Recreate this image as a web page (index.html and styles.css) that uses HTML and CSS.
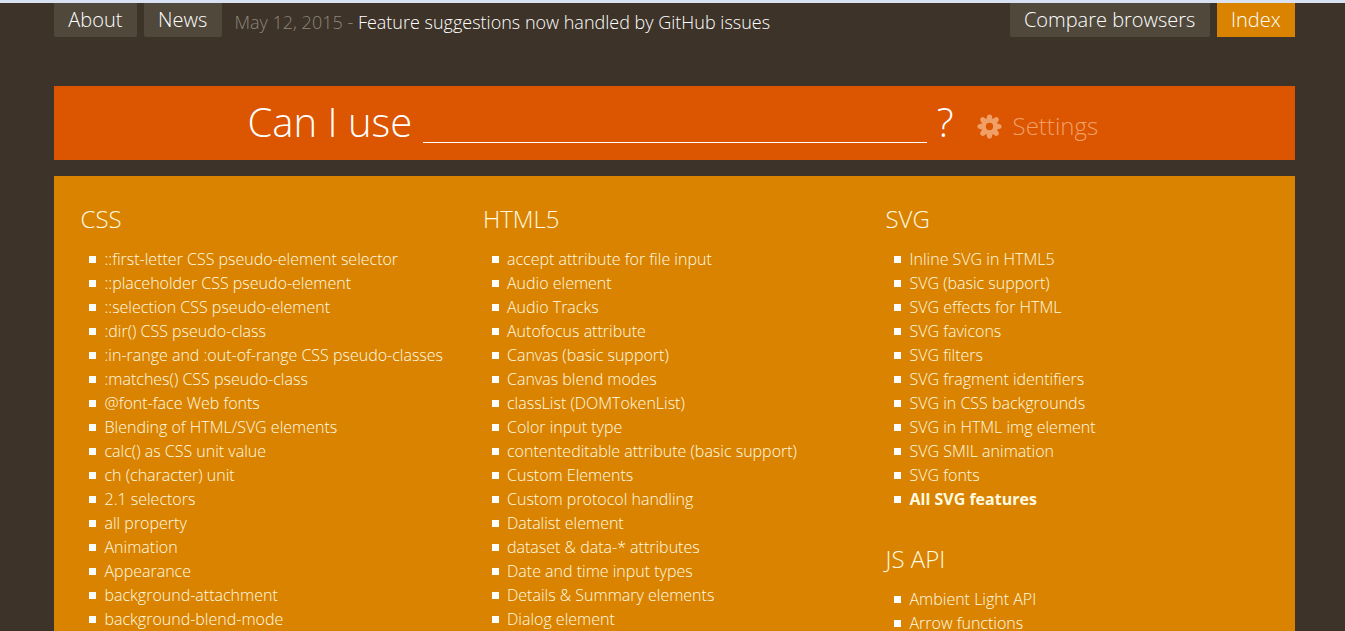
FILE: index.html
```html
<!DOCTYPE html>
<html lang="en">
<head>
	<meta charset="UTF-8">
	<title>Can I use... Support tables for HTML5, CSS3, etc</title>
	<link rel="stylesheet" href="styles.css">
</head>
<body>
	<div class="page">
		<header class="top-bar">
			<a class="tab">About</a>
			<a class="tab">News</a>
			<p class="news"><span class="date">May 12, 2015 - </span>Feature suggestions now handled by GitHub issues</p>
			<a class="tab compare">Compare browsers</a>
			<a class="tab active">Index</a>
		</header>

		<form class="search">
			<label class="search-label" for="feature">Can I use</label>
			<input class="search-input" id="feature" type="text">
			<span class="search-mark">?</span>
			<span class="settings">
				<svg class="gear" viewBox="0 0 26 26">
					<g fill="currentColor">
						<path id="teeth" d="M9.6 6 L10.8 1.4 Q13 -0.6 15.2 1.4 L16.4 6 V20 L15.2 24.6 Q13 26.6 10.8 24.6 L9.6 20 Z"/>
						<use href="#teeth" transform="rotate(45 13 13)"/>
						<use href="#teeth" transform="rotate(90 13 13)"/>
						<use href="#teeth" transform="rotate(135 13 13)"/>
						<circle cx="13" cy="13" r="8.4"/>
					</g>
					<circle cx="13" cy="13" r="3.8" fill="#dc5500"/>
				</svg>
				Settings
			</span>
		</form>

		<main class="features">
			<div class="column">
				<h2>CSS</h2>
				<ul>
					<li>::first-letter CSS pseudo-element selector</li>
					<li>::placeholder CSS pseudo-element</li>
					<li>::selection CSS pseudo-element</li>
					<li>:dir() CSS pseudo-class</li>
					<li>:in-range and :out-of-range CSS pseudo-classes</li>
					<li>:matches() CSS pseudo-class</li>
					<li>@font-face Web fonts</li>
					<li>Blending of HTML/SVG elements</li>
					<li>calc() as CSS unit value</li>
					<li>ch (character) unit</li>
					<li>2.1 selectors</li>
					<li>all property</li>
					<li>Animation</li>
					<li>Appearance</li>
					<li>background-attachment</li>
					<li>background-blend-mode</li>
				</ul>
			</div>
			<div class="column">
				<h2>HTML5</h2>
				<ul>
					<li>accept attribute for file input</li>
					<li>Audio element</li>
					<li>Audio Tracks</li>
					<li>Autofocus attribute</li>
					<li>Canvas (basic support)</li>
					<li>Canvas blend modes</li>
					<li>classList (DOMTokenList)</li>
					<li>Color input type</li>
					<li>contenteditable attribute (basic support)</li>
					<li>Custom Elements</li>
					<li>Custom protocol handling</li>
					<li>Datalist element</li>
					<li>dataset &amp; data-* attributes</li>
					<li>Date and time input types</li>
					<li>Details &amp; Summary elements</li>
					<li>Dialog element</li>
				</ul>
			</div>
			<div class="column">
				<h2>SVG</h2>
				<ul>
					<li>Inline SVG in HTML5</li>
					<li>SVG (basic support)</li>
					<li>SVG effects for HTML</li>
					<li>SVG favicons</li>
					<li>SVG filters</li>
					<li>SVG fragment identifiers</li>
					<li>SVG in CSS backgrounds</li>
					<li>SVG in HTML img element</li>
					<li>SVG SMIL animation</li>
					<li>SVG fonts</li>
					<li class="all">All SVG features</li>
				</ul>
				<h2>JS API</h2>
				<ul>
					<li>Ambient Light API</li>
					<li>Arrow functions</li>
				</ul>
			</div>
		</main>
	</div>
</body>
</html>
```
FILE: styles.css
```css
* {
	box-sizing: border-box;
}
body {
	margin: 0;
	height: 631px;
	overflow: hidden;
	background: #3d3328;
	border-top: 3px solid #d9e2f2;
	color: #fff;
	font-family: "Open Sans", sans-serif;
	font-weight: 300;
}
.page {
	width: 1241px;
	margin-left: 54px;
}
.top-bar {
	display: flex;
	height: 34px;
}
.tab {
	height: 34px;
	margin-right: 7px;
	padding: 0 14.3px;
	background: #50483b;
	border-radius: 0 0 2px 2px;
	font-size: 20px;
	line-height: 34px;
	white-space: nowrap;
}
.compare {
	margin-left: auto;
}
.active {
	margin-right: 0;
	background: #da8300;
	border-radius: 0;
}
.news {
	margin: 0 0 0 6px;
	font-size: 18px;
	line-height: 38px;
	white-space: nowrap;
}
.date {
	color: #8d867b;
}
.search {
	display: flex;
	height: 74px;
	margin-top: 49px;
	padding-left: 193.5px;
	background: #dc5500;
	line-height: 72px;
}
.search-label,
.search-mark {
	font-size: 40px;
}
.search-input {
	width: 504px;
	height: 43px;
	margin: 14px 10px 0 10.5px;
	padding: 0;
	background: none;
	border: 0;
	border-bottom: 1px solid #fff;
}
.settings {
	display: flex;
	align-items: center;
	gap: 11px;
	margin: 6px 0 0 23px;
	color: #f0a067;
	font-size: 24px;
}
.gear {
	width: 25px;
	height: 25px;
}
.features {
	display: grid;
	grid-template-columns: 402.5px 402.5px 1fr;
	height: 455px;
	margin-top: 16px;
	padding: 26px 0 0 26.5px;
	background: #da8300;
	color: #fffbe2;
}
h2 {
	margin: 0 0 11px;
	font-size: 24px;
	font-weight: 300;
	line-height: 34px;
}
ul {
	margin: 0 0 31px;
	padding: 0;
	list-style: none;
}
li {
	display: flex;
	align-items: center;
	height: 24px;
	padding-left: 8.5px;
	font-size: 16px;
	white-space: nowrap;
}
li::before {
	content: "";
	width: 7px;
	height: 7px;
	margin: 0 8.5px 0 0;
	background: #fff;
}
.all {
	font-weight: 700;
}
```
